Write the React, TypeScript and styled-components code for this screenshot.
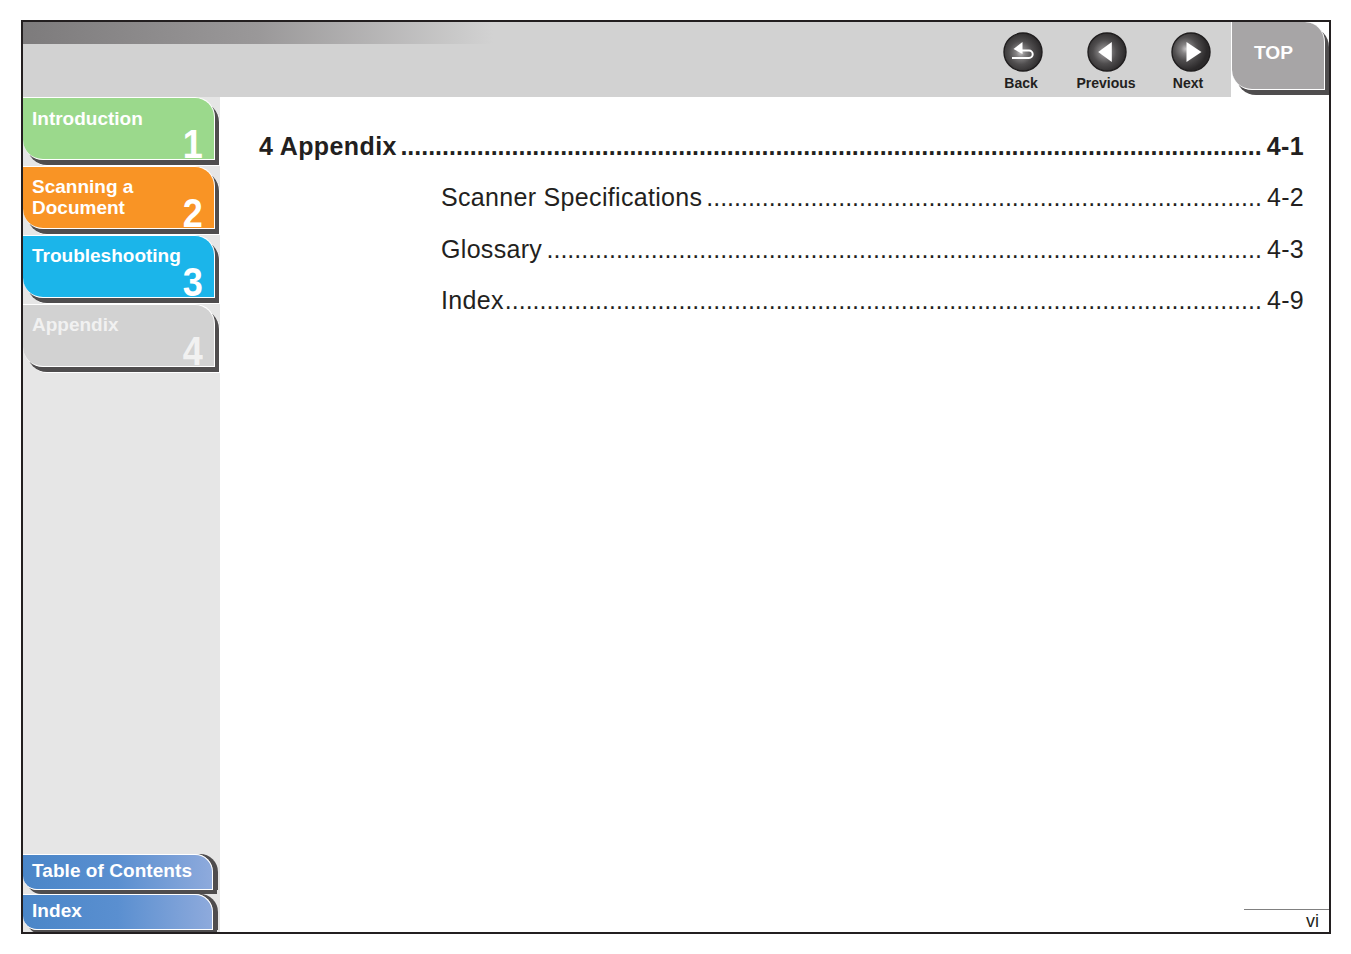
import React from "react";
import styled, { createGlobalStyle } from "styled-components";

const Global = createGlobalStyle`
  html, body { margin: 0; padding: 0; background: #fff; }
  body { font-family: "Liberation Sans", Arial, sans-serif; }
`;

const Frame = styled.div`
  box-sizing: border-box;
  width: 1310px;
  height: 914px;
  margin: 20px 0 0 21px;
  border: 2px solid #231f20;
  display: flex;
  flex-direction: column;
  overflow: hidden;
`;

const Header = styled.header`
  display: flex;
  height: 75px;
  flex: none;
`;

const Banner = styled.div`
  flex: 1;
  display: flex;
  justify-content: flex-end;
  gap: 44px;
  padding: 10px 20px 0 0;
  background: linear-gradient(90deg, #7d7b7c 0%, #9a9899 50%, #d2d2d2 100%) 0 0 / 470px 22px no-repeat, #d2d2d2;
`;

const NavButton = styled.div`
  width: 40px;
  display: flex;
  flex-direction: column;
  align-items: center;
  font-size: 14px;
  font-weight: 700;
  line-height: 16px;
  color: #231f20;
`;

const NavLabel = styled.span<{ $shift: number }>`
  margin-top: 3px;
  white-space: nowrap;
  transform: translateX(${p => p.$shift}px);
`;

const TopCell = styled.div`
  width: 98px;
  flex: none;
  background: #fff;
`;

const TopTab = styled.div`
  box-sizing: border-box;
  width: 93px;
  height: 68px;
  margin-left: 1px;
  padding: 20px 0 0 22px;
  background: #a7a5a6;
  border-right: 1px solid #fff;
  border-bottom: 1px solid #fff;
  border-radius: 0 20px 0 20px;
  box-shadow: 4px 5px 0 #4f4d4e;
  color: #fff;
  font-size: 19.2px;
  font-weight: 700;
  line-height: 22px;
`;

const Body = styled.div`
  flex: 1;
  display: flex;
  min-height: 0;
`;

const Sidebar = styled.nav`
  width: 197px;
  flex: none;
  box-sizing: border-box;
  background: #e6e6e6;
  display: flex;
  flex-direction: column;
  justify-content: space-between;
  overflow: hidden;
`;

const ChapterList = styled.div`
  display: flex;
  flex-direction: column;
  gap: 6px;
`;

const Chapter = styled.div<{ $bg: string; $color?: string; $lift: number }>`
  position: relative;
  box-sizing: border-box;
  width: 192px;
  height: 63px;
  padding: ${p => 10 - p.$lift}px 0 0 9px;
  background: ${p => p.$bg};
  color: ${p => p.$color ?? "#fff"};
  border: 1px solid #fff;
  border-left: 0;
  border-radius: 0 20px 0 20px;
  box-shadow: 4px 5px 0 #4f4d4e, 5px 6px 0 #fff;
  font-size: 19px;
  font-weight: 700;
  line-height: 21px;
  overflow: hidden;
`;

const Numeral = styled.span`
  position: absolute;
  right: 11px;
  bottom: 0;
  font-size: 41px;
  line-height: 30px;
  font-weight: 700;
  transform: scaleX(0.88);
  transform-origin: right bottom;
`;

const LinkList = styled.div`
  display: flex;
  flex-direction: column;
  gap: 4px;
  padding-bottom: 2px;
`;

const LinkTab = styled.div`
  box-sizing: border-box;
  width: 190px;
  height: 36px;
  padding: 5px 0 0 9px;
  background: linear-gradient(90deg, #4a86c8 0%, #5a8fd0 50%, #8eaadc 100%);
  border: 1px solid #fff;
  border-left: 0;
  border-radius: 0 18px 0 14px;
  box-shadow: 5px 0 0 #4f4d4e, 4px 4px 0 #4f4d4e;
  color: #fff;
  font-size: 19px;
  letter-spacing: 0.06px;
  font-weight: 700;
  line-height: 21px;
`;

const Main = styled.main`
  flex: 1;
  display: flex;
  flex-direction: column;
  padding: 31px 0 0 39px;
  min-width: 0;
  color: #231f20;
`;

const Contents = styled.div`
  flex: 1;
  padding-right: 25px;
`;

const Row = styled.div<{ $sub?: boolean }>`
  display: flex;
  align-items: baseline;
  height: 51.4px;
  padding-left: ${p => (p.$sub ? "182px" : "0")};
  font-size: 25px;
  font-weight: ${p => (p.$sub ? 400 : 700)};
  letter-spacing: ${p => (p.$sub ? "0.32px" : "0.4px")};
  line-height: 36px;
`;

const Leader = styled.span`
  flex: 1;
  min-width: 0;
  white-space: nowrap;
  text-align: right;
  margin-right: 5px;
  letter-spacing: 0;
`;

const Footer = styled.footer`
  align-self: flex-end;
  box-sizing: border-box;
  width: 85px;
  height: 23px;
  border-top: 1px solid #808080;
  padding-right: 10px;
  text-align: right;
  font-size: 18px;
  line-height: 22px;
`;

const ICONS = {
  back: { cx: "44%", cy: "52%" },
  prev: { cx: "44%", cy: "50%" },
  next: { cx: "36%", cy: "42%" },
};

const Icon: React.FC<{ kind: "back" | "prev" | "next" }> = ({ kind }) => (
  <svg width="40" height="40" viewBox="0 0 40 40">
    <defs>
      <radialGradient id={`glow-${kind}`} cx={ICONS[kind].cx} cy={ICONS[kind].cy} r="56%">
        <stop offset="0%" stopColor="#c4c2c3" />
        <stop offset="22%" stopColor="#858384" />
        <stop offset="55%" stopColor="#504e4f" />
        <stop offset="100%" stopColor="#2b292a" />
      </radialGradient>
    </defs>
    <circle cx="20" cy="20" r="19" fill={`url(#glow-${kind})`} stroke="#1f1d1e" strokeWidth="1.4" />
    {kind === "back" && (
      <>
        <path d="M9 26H26a3.6 3.6 0 0 0 0-7.4H17" fill="none" stroke="#fff" strokeWidth="2" />
        <path d="M19.5 10L10.5 17 19.5 22z" fill="#fff" />
      </>
    )}
    {kind === "prev" && <path d="M24.8 10V30L11.2 20z" fill="#fff" />}
    {kind === "next" && <path d="M15.5 10V30L30.5 20z" fill="#fff" />}
  </svg>
);

const chapters = [
  { title: ["Introduction"], n: "1", bg: "#9bd98c", lift: 0 },
  { title: ["Scanning a", "Document"], n: "2", bg: "#f99425", lift: 1 },
  { title: ["Troubleshooting"], n: "3", bg: "#1bb5ea", lift: 1 },
  { title: ["Appendix"], n: "4", bg: "#d2d2d2", color: "#f1f1f1", lift: 1 },
];

const rows = [
  { label: "4 Appendix", page: "4-1", dots: 124 },
  { label: "Scanner Specifications", page: "4-2", sub: true, dots: 80 },
  { label: "Glossary", page: "4-3", sub: true, dots: 103 },
  { label: "Index", page: "4-9", sub: true, dots: 109 },
];

export default function App() {
  return (
    <>
      <Global />
      <Frame>
        <Header>
          <Banner>
            <NavButton><Icon kind="back" /><NavLabel $shift={-2}>Back</NavLabel></NavButton>
            <NavButton><Icon kind="prev" /><NavLabel $shift={-1}>Previous</NavLabel></NavButton>
            <NavButton><Icon kind="next" /><NavLabel $shift={-3}>Next</NavLabel></NavButton>
          </Banner>
          <TopCell><TopTab>TOP</TopTab></TopCell>
        </Header>
        <Body>
          <Sidebar>
            <ChapterList>
              {chapters.map(c => (
                <Chapter key={c.n} $bg={c.bg} $color={c.color} $lift={c.lift}>
                  {c.title.map(t => <div key={t}>{t}</div>)}
                  <Numeral>{c.n}</Numeral>
                </Chapter>
              ))}
            </ChapterList>
            <LinkList>
              <LinkTab>Table of Contents</LinkTab>
              <LinkTab>Index</LinkTab>
            </LinkList>
          </Sidebar>
          <Main>
            <Contents>
              {rows.map(r => (
                <Row key={r.label} $sub={r.sub}>
                  <span>{r.label}</span>
                  <Leader>{".".repeat(r.dots)}</Leader>
                  <span>{r.page}</span>
                </Row>
              ))}
            </Contents>
            <Footer>vi</Footer>
          </Main>
        </Body>
      </Frame>
    </>
  );
}
